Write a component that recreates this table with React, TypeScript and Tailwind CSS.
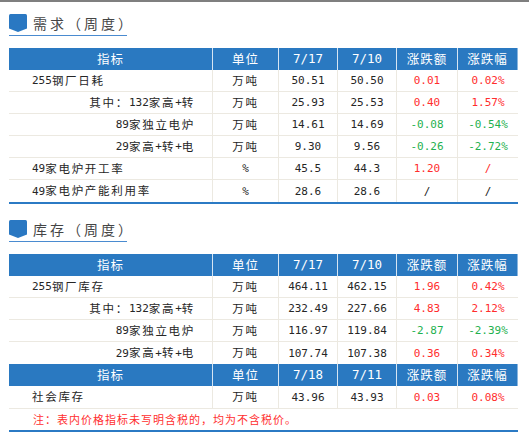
import React from "react";

type V = "body" | "head" | "title" | "note";

const ASC: Record<V, string> = {
  body: "font-['DejaVu_Sans_Mono',monospace] text-[11px]",
  head: "font-['DejaVu_Sans_Mono',monospace] text-[12.5px]",
  title: "font-['DejaVu_Sans_Mono',monospace] text-[14px]",
  note: "font-['DejaVu_Sans_Mono',monospace] text-[10px]",
};
const CJK: Record<V, string> = {
  body: "font-['Noto_Sans_CJK_SC',sans-serif] text-[11.5px] tracking-[1.7px]",
  head: "font-['Noto_Sans_CJK_SC',sans-serif] text-[12.5px] tracking-[1px]",
  title: "font-['Noto_Sans_CJK_SC',sans-serif] text-[14px] tracking-[3px]",
  note: "font-['Noto_Sans_CJK_SC',sans-serif] text-[11px] tracking-[1px]",
};

function Mixed({ s, v }: { s: string; v: V }) {
  const parts = s.split(/([\x00-\x7F]+)/).filter((p) => p.length > 0);
  return (
    <>
      {parts.map((p, i) =>
        /^[\x00-\x7F]+$/.test(p) ? (
          <span key={i} className={ASC[v]}>
            {p}
          </span>
        ) : (
          <span key={i} className={CJK[v]}>
            {p}
          </span>
        )
      )}
    </>
  );
}

function Heading({ title }: { title: string }) {
  return (
    <div className="flex w-[118px] flex-col">
      <div className="flex items-center gap-[6px] whitespace-nowrap">
        <svg width="18" height="18" viewBox="0 0 18 18" className="shrink-0">
          <path d="M1.5 0 H16.5 Q18 0 18 1.5 V14.5 L9 18 L0 14.5 V1.5 Q0 0 1.5 0 Z" fill="#2a78c2" />
        </svg>
        <span className="flex h-[18px] items-center leading-none text-[#454545]">
          <Mixed s={title} v="title" />
        </span>
      </div>
      <div className="mt-[3px] h-px w-[118px] bg-[#4a8bd0]" />
    </div>
  );
}

const GRID = "grid grid-cols-[204px_66px_59px_59px_61px_60px]";

function HeaderRow({ cells }: { cells: string[] }) {
  return (
    <div className={`${GRID} h-[22px] bg-[#2a79c1] text-white`}>
      {cells.map((c, i) => (
        <div
          key={i}
          className={`flex items-center justify-center leading-none ${
            i < cells.length - 1 ? "border-r border-[#d6e5f3]" : "border-r border-[#8ab6df]"
          }`}
        >
          <Mixed s={c} v="head" />
        </div>
      ))}
    </div>
  );
}

type Row = {
  name: string;
  indent?: boolean;
  unit: string;
  a: string;
  b: string;
  d: string;
  p: string;
  dc?: "r" | "g" | "k";
};

function DataRow({ r, last }: { r: Row; last?: boolean }) {
  const col =
    r.dc === "r" ? "text-[#ff2d2d]" : r.dc === "g" ? "text-[#1fb14f]" : "text-[#262626]";
  const cell = "flex items-center justify-center leading-none border-r border-[#ece9e1]";
  return (
    <div className={`${GRID} h-[22px] text-[#262626] ${last ? "" : "border-b border-[#ece9e1]"}`}>
      <div
        className={`flex items-center leading-none border-r border-[#ece9e1] ${
          r.indent ? "justify-end pr-[17px]" : "justify-start pl-[23px]"
        }`}
      >
        <Mixed s={r.name} v="body" />
      </div>
      <div className={cell}>
        <Mixed s={r.unit} v="body" />
      </div>
      <div className={cell}>
        <Mixed s={r.a} v="body" />
      </div>
      <div className={cell}>
        <Mixed s={r.b} v="body" />
      </div>
      <div className={`${cell} ${col}`}>
        <Mixed s={r.d} v="body" />
      </div>
      <div className={`flex items-center justify-center leading-none ${col}`}>
        <Mixed s={r.p} v="body" />
      </div>
    </div>
  );
}

const demand: Row[] = [
  { name: "255钢厂日耗", unit: "万吨", a: "50.51", b: "50.50", d: "0.01", p: "0.02%", dc: "r" },
  { name: "其中：132家高+转", indent: true, unit: "万吨", a: "25.93", b: "25.53", d: "0.40", p: "1.57%", dc: "r" },
  { name: "89家独立电炉", indent: true, unit: "万吨", a: "14.61", b: "14.69", d: "-0.08", p: "-0.54%", dc: "g" },
  { name: "29家高+转+电", indent: true, unit: "万吨", a: "9.30", b: "9.56", d: "-0.26", p: "-2.72%", dc: "g" },
  { name: "49家电炉开工率", unit: "%", a: "45.5", b: "44.3", d: "1.20", p: "/", dc: "r" },
  { name: "49家电炉产能利用率", unit: "%", a: "28.6", b: "28.6", d: "/", p: "/", dc: "k" },
];

const stock: Row[] = [
  { name: "255钢厂库存", unit: "万吨", a: "464.11", b: "462.15", d: "1.96", p: "0.42%", dc: "r" },
  { name: "其中：132家高+转", indent: true, unit: "万吨", a: "232.49", b: "227.66", d: "4.83", p: "2.12%", dc: "r" },
  { name: "89家独立电炉", indent: true, unit: "万吨", a: "116.97", b: "119.84", d: "-2.87", p: "-2.39%", dc: "g" },
  { name: "29家高+转+电", indent: true, unit: "万吨", a: "107.74", b: "107.38", d: "0.36", p: "0.34%", dc: "r" },
];

const social: Row = { name: "社会库存", unit: "万吨", a: "43.96", b: "43.93", d: "0.03", p: "0.08%", dc: "r" };

export default function App() {
  return (
    <div className="h-[436px] w-[529px] overflow-hidden border-t-2 border-[#7f7f7f] bg-white pl-[9px]">
      <div className="pt-[12px]">
        <Heading title="需求（周度）" />
      </div>
      <div className="mt-[12px] w-[509px] border-b-2 border-[#2b7ac4]">
        <HeaderRow cells={["指标", "单位", "7/17", "7/10", "涨跌额", "涨跌幅"]} />
        {demand.map((r, i) => (
          <DataRow key={i} r={r} last={i === demand.length - 1} />
        ))}
      </div>

      <div className="mt-[16px]">
        <Heading title="库存（周度）" />
      </div>
      <div className="mt-[12px] w-[509px] border-b-2 border-[#2b7ac4]">
        <HeaderRow cells={["指标", "单位", "7/17", "7/10", "涨跌额", "涨跌幅"]} />
        {stock.map((r, i) => (
          <DataRow key={i} r={r} last={i === stock.length - 1} />
        ))}
        <HeaderRow cells={["指标", "单位", "7/18", "7/11", "涨跌额", "涨跌幅"]} />
        <div className="border-b border-[#ece9e1]">
          <DataRow r={social} last />
        </div>
        <div className="flex h-[21px] items-center pl-[24px] leading-none text-[#ff3030]">
          <Mixed s="注：表内价格指标未写明含税的，均为不含税价。" v="note" />
        </div>
      </div>
    </div>
  );
}
